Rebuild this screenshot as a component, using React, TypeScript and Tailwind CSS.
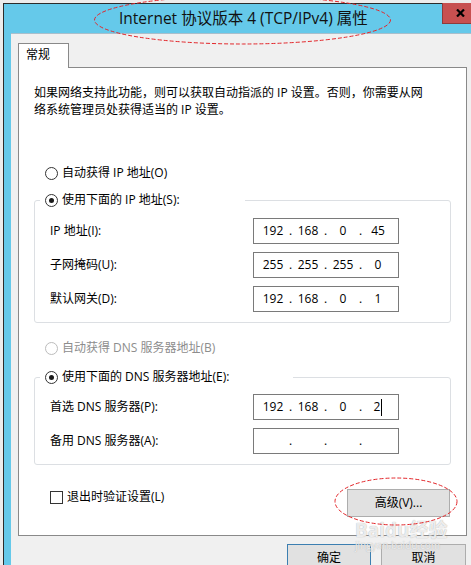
import { Fragment } from "react";

const font = "font-['Segoe_UI','Open_Sans','Noto_Sans_CJK_SC',sans-serif]";

const Radio = ({ checked, disabled }: { checked?: boolean; disabled?: boolean }) => (
    <span
        className={`flex h-[13px] w-[13px] shrink-0 items-center justify-center rounded-full border bg-white ${
            disabled ? "border-[#bcbcbc]" : "border-[#333333]"
        }`}
    >
        {checked && <span className="h-[5px] w-[5px] rounded-full bg-[#1a1a1a]" />}
    </span>
);

const IpBox = ({ parts, caret }: { parts: string[]; caret?: boolean }) => (
    <div className="flex h-[26px] w-[146px] items-center border border-[#7a7a7a] bg-white pl-[5px] leading-[16px]">
        {parts.map((p, i) => (
            <Fragment key={i}>
                {i > 0 && <span className="w-[7px] text-center">.</span>}
                <span className="flex w-[28px] items-center justify-center">
                    {p}
                    {caret && i === 3 && <span className="ml-px inline-block h-[17px] w-px bg-black" />}
                </span>
            </Fragment>
        ))}
    </div>
);

const Field = ({ label, parts, caret }: { label: string; parts: string[]; caret?: boolean }) => (
    <div className="flex items-center">
        <span className="w-[203px]">{label}</span>
        <IpBox parts={parts} caret={caret} />
    </div>
);

export default function App() {
    return (
        <div className={`relative flex h-[565px] w-[471px] overflow-hidden bg-[#ececec] pl-[3px] pt-[3px] text-[12px] text-black ${font}`}>
            {/* dialog window */}
            <div className="flex-1 border-l border-t border-[#2b2b2b] bg-[#65c9ea]">
                <div className="flex h-[29px] items-center">
                    <span className="flex-1 pl-[115px] text-[15.5px] text-[#111]">Internet 协议版本 4 (TCP/IPv4) 属性</span>
                    <div className="-mt-px flex h-[21px] w-[29px] items-center self-start border-b border-l border-[#8e3b3b] bg-[#c75050] pl-[13px]">
                        <svg width="9" height="8" viewBox="0 0 9 8">
                            <path d="M1 0.5 L8 7.5 M8 0.5 L1 7.5" stroke="#000" strokeWidth="2.2" />
                        </svg>
                    </div>
                </div>

                <div className="ml-[7px] h-[540px] border-t border-[#a9bfcc] bg-[#f0f0f0] pt-[9px]">
                    <div className="relative z-10 -mb-px ml-[7px] h-[25px] w-[51px] border-l border-r border-t border-[#898989] bg-white pl-[7px] pt-[3px] leading-[16px]">
                        常规
                    </div>
                    <div className="ml-[7px] h-[469px] w-[449px] border border-[#898989] bg-white px-[15px] pt-[16px]">
                        <p className="leading-[17px]">
                            如果网络支持此功能，则可以获取自动指派的 IP 设置。否则，你需要从网
                            <br />
                            络系统管理员处获得适当的 IP 设置。
                        </p>

                        <div className="ml-[11px] mt-[47px] flex h-[16px] items-center gap-[4px]">
                            <Radio />
                            自动获得 IP 地址(O)
                        </div>

                        <fieldset className="mt-[11px] rounded-[3px] border border-[#dcdfe3]">
                            <legend className="ml-[5px] w-[205px] pl-[5px]">
                                <div className="flex h-[16px] items-center gap-[4px]">
                                    <Radio checked />
                                    使用下面的 IP 地址(S):
                                </div>
                            </legend>
                            <div className="flex flex-col gap-[8px] pb-[10px] pl-[15px] pt-[10px]">
                                <Field label="IP 地址(I):" parts={["192", "168", "0", "45"]} />
                                <Field label="子网掩码(U):" parts={["255", "255", "255", "0"]} />
                                <Field label="默认网关(D):" parts={["192", "168", "0", "1"]} />
                            </div>
                        </fieldset>

                        <div className="ml-[11px] mt-[17px] flex h-[16px] items-center gap-[4px] text-[#8d8d8d]">
                            <Radio disabled />
                            自动获得 DNS 服务器地址(B)
                        </div>

                        <fieldset className="mt-[13px] rounded-[3px] border border-[#dcdfe3]">
                            <legend className="ml-[5px] w-[253px] pl-[5px]">
                                <div className="flex h-[16px] items-center gap-[4px]">
                                    <Radio checked />
                                    使用下面的 DNS 服务器地址(E):
                                </div>
                            </legend>
                            <div className="flex flex-col gap-[8px] pb-[10px] pl-[15px] pt-[9px]">
                                <Field label="首选 DNS 服务器(P):" parts={["192", "168", "0", "2"]} caret />
                                <Field label="备用 DNS 服务器(A):" parts={["", "", "", ""]} />
                            </div>
                        </fieldset>

                        <div className="mt-[24px] flex items-start justify-between pl-[16px] pr-px">
                            <div className="flex h-[16px] items-center gap-[4px] leading-[16px]">
                                <span className="h-[13px] w-[13px] border border-[#333333] bg-white" />
                                退出时验证设置(L)
                            </div>
                            <button className="h-[28px] w-[103px] border border-[#adadad] bg-[#e1e1e1]">高级(V)...</button>
                        </div>
                    </div>

                    <div className="mt-[8px] flex justify-end gap-[10px] pr-[5px]">
                        <button className="h-[28px] w-[84px] border border-[#3c7fb1] bg-[#e1e1e1]">确定</button>
                        <button className="h-[28px] w-[85px] border border-[#adadad] bg-[#e1e1e1]">取消</button>
                    </div>
                </div>
            </div>

            {/* watermark */}
            <div className="pointer-events-none absolute left-[355px] top-[520px] flex flex-col items-start text-white/80 [text-shadow:0_0_1px_#9a9a9a]">
                <span className="text-[19px] font-bold leading-[20px]">Baidu经验</span>
                <span className="text-[10px] leading-[10px]">jingyan.baidu.com</span>
            </div>

            {/* red annotation rings */}
            <svg className="pointer-events-none absolute left-0 top-0" width="471" height="565">
                <ellipse cx="242.5" cy="20" rx="148" ry="24" fill="none" stroke="#e3262a" strokeWidth="1" strokeDasharray="4 2" />
                <ellipse cx="396" cy="501.5" rx="61" ry="23.5" fill="none" stroke="#e3262a" strokeWidth="1" strokeDasharray="4 2" />
            </svg>
        </div>
    );
}
